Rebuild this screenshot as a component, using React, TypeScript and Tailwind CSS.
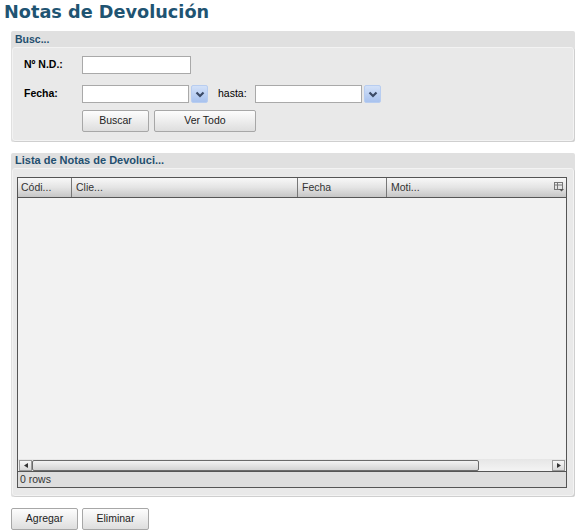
const Chevron = () => (
    <svg width="10" height="7" viewBox="0 0 10 7">
        <path d="M1.5 1.5 L5 5 L8.5 1.5" fill="none" stroke="#3b4a66" strokeWidth="2.2" />
    </svg>
)

const DateField = ({ width }: { width: string }) => (
    <div className="flex items-center gap-[2px]">
        <input className={`${width} h-[18px] bg-white border border-[#a9a9a9] outline-none`} />
        <button className="w-[17px] h-[18px] flex items-center justify-center rounded-[2px] bg-gradient-to-b from-[#d3e1f8] to-[#a8c2ee] border border-[#b8cdf0]">
            <Chevron />
        </button>
    </div>
)

const Btn = ({ label, width }: { label: string; width: string }) => (
    <button
        className={`${width} h-[22px] rounded-[2px] border border-[#a7a7a7] bg-gradient-to-b from-[#fdfdfd] to-[#dedede] text-[10.5px] text-[#222]`}
    >
        {label}
    </button>
)

const App = () => {
    return (
        <div className="w-[579px] h-[531px] bg-white overflow-hidden" style={{ fontFamily: '"Liberation Sans", Arial, sans-serif' }}>
            {/* Title */}
            <h1
                className="pl-[4px] pt-[1px] h-[31px] text-[17.7px] font-bold text-[#1f5472] leading-[22px]"
                style={{ fontFamily: '"DejaVu Sans", Verdana, sans-serif' }}
            >
                Notas de Devolución
            </h1>

            {/* Busqueda */}
            <div className="ml-[11px] w-[564px] bg-[#e0e0e0] rounded-[2px] p-[1px] pt-0">
                <div className="h-[16px] pl-[3px] text-[10.5px] font-bold text-[#1f4f6f] leading-[16px]">Busc...</div>
                <div className="bg-[#e9e9e9] border border-[#f3f3f3] rounded-[3px] shadow-[1px_1px_0_#cfcfcf] pl-[11px] pt-[8px] pb-[8px]">
                    <div className="flex items-center h-[18px]">
                        <span className="w-[58px] text-[10.5px] font-bold text-black">Nº N.D.:</span>
                        <input className="w-[109px] h-[18px] bg-white border border-[#a9a9a9] outline-none" />
                    </div>
                    <div className="flex items-center h-[18px] mt-[11px]">
                        <span className="w-[58px] text-[10.5px] font-bold text-black">Fecha:</span>
                        <DateField width="w-[107px]" />
                        <span className="ml-[10px] w-[37px] text-[10.5px] text-black">hasta:</span>
                        <DateField width="w-[107px]" />
                    </div>
                    <div className="flex gap-[5px] ml-[58px] mt-[7px]">
                        <Btn label="Buscar" width="w-[67px]" />
                        <Btn label="Ver Todo" width="w-[102px]" />
                    </div>
                </div>
            </div>

            {/* Lista */}
            <div className="ml-[11px] mt-[11px] w-[564px] bg-[#e0e0e0] rounded-[2px] p-[1px] pt-0">
                <div className="h-[15px] pl-[3px] text-[11px] font-bold text-[#1f4f6f] leading-[15px]">Lista de Notas de Devoluci...</div>
                <div className="bg-[#e9e9e9] border border-[#f3f3f3] rounded-[3px] shadow-[1px_1px_0_#cfcfcf] pl-[4px] pr-[6px] pt-[8px] pb-[7px]">
                    <div className="border border-[#555] bg-[#f2f2f2] flex flex-col h-[311px]">
                        {/* header */}
                        <div className="flex h-[20px] border-b border-[#555] bg-gradient-to-b from-[#f8f8f8] via-[#e4e4e4] to-[#c6c6c6] text-[10.5px] text-[#333] leading-[19px]">
                            <div className="w-[54px] pl-[3px] border-r border-[#777]">Códi...</div>
                            <div className="w-[226px] pl-[4px] border-r border-[#777]">Clie...</div>
                            <div className="w-[89px] pl-[4px] border-r border-[#777]">Fecha</div>
                            <div className="flex-1 pl-[4px] flex justify-between pr-[2px]">
                                <span>Moti...</span>
                                <svg width="10" height="10" viewBox="0 0 10 10" className="mt-[4px]">
                                    <rect x="0.5" y="0.5" width="8" height="7" fill="none" stroke="#777" />
                                    <path d="M0.5 3 H8.5 M3.5 0.5 V7.5" stroke="#777" />
                                    <path d="M5 7 H10 L7.5 9.5 Z" fill="#555" />
                                </svg>
                            </div>
                        </div>
                        <div className="flex-1" />
                        {/* scrollbar */}
                        <div className="flex h-[13px] items-center bg-gradient-to-b from-[#e6e6e6] to-[#f4f4f4] border-b border-[#555] px-[1px]">
                            <div className="w-[13px] h-[11px] border border-[#9a9a9a] bg-gradient-to-b from-[#f8f8f8] to-[#d8d8d8] flex items-center justify-center">
                                <svg width="4" height="5" viewBox="0 0 4 5"><path d="M4 0 L0 2.5 L4 5 Z" fill="#333" /></svg>
                            </div>
                            <div className="w-[447px] h-[11px] rounded-[2px] border border-[#6a6a6a] bg-gradient-to-b from-[#f3f3f3] to-[#d3d3d3]" />
                            <div className="flex-1" />
                            <div className="w-[13px] h-[11px] border border-[#9a9a9a] bg-gradient-to-b from-[#f8f8f8] to-[#d8d8d8] flex items-center justify-center">
                                <svg width="4" height="5" viewBox="0 0 4 5"><path d="M0 0 L4 2.5 L0 5 Z" fill="#333" /></svg>
                            </div>
                        </div>
                        <div className="h-[15px] bg-[#dedede] pl-[2px] text-[10.5px] text-[#333] leading-[15px]">0 rows</div>
                    </div>
                </div>
            </div>

            {/* Acciones */}
            <div className="flex gap-[4px] ml-[11px] mt-[11px]">
                <Btn label="Agregar" width="w-[67px]" />
                <Btn label="Eliminar" width="w-[67px]" />
            </div>
        </div>
    )
}

export default App
